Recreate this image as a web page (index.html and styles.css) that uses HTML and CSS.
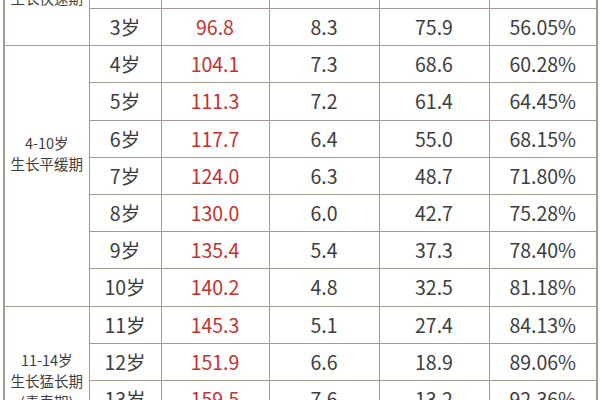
FILE: index.html
```html
<!DOCTYPE html>
<html lang="zh">
<head>
<meta charset="utf-8">
<link rel="stylesheet" href="styles.css">
</head>
<body>
<table class="growth">
  <colgroup>
    <col class="c-group"><col class="c-age"><col class="c-h"><col class="c-gain"><col class="c-rem"><col class="c-pct">
  </colgroup>
  <tbody>
    <tr class="row-hidden">
      <td class="group group-first" rowspan="2">0-3岁<br>生长快速期</td>
      <td>2岁</td><td class="red">88.5</td><td>10.3</td><td>84.2</td><td>51.24%</td>
    </tr>
    <tr><td>3岁</td><td class="red">96.8</td><td>8.3</td><td>75.9</td><td>56.05%</td></tr>
    <tr>
      <td class="group group-mid" rowspan="7">4-10岁<br>生长平缓期</td>
      <td>4岁</td><td class="red">104.1</td><td>7.3</td><td>68.6</td><td>60.28%</td>
    </tr>
    <tr><td>5岁</td><td class="red">111.3</td><td>7.2</td><td>61.4</td><td>64.45%</td></tr>
    <tr><td>6岁</td><td class="red">117.7</td><td>6.4</td><td>55.0</td><td>68.15%</td></tr>
    <tr><td>7岁</td><td class="red">124.0</td><td>6.3</td><td>48.7</td><td>71.80%</td></tr>
    <tr><td>8岁</td><td class="red">130.0</td><td>6.0</td><td>42.7</td><td>75.28%</td></tr>
    <tr><td>9岁</td><td class="red">135.4</td><td>5.4</td><td>37.3</td><td>78.40%</td></tr>
    <tr><td>10岁</td><td class="red">140.2</td><td>4.8</td><td>32.5</td><td>81.18%</td></tr>
    <tr>
      <td class="group" rowspan="4">11-14岁<br>生长猛长期<br>(青春期)</td>
      <td>11岁</td><td class="red">145.3</td><td>5.1</td><td>27.4</td><td>84.13%</td>
    </tr>
    <tr><td>12岁</td><td class="red">151.9</td><td>6.6</td><td>18.9</td><td>89.06%</td></tr>
    <tr><td>13岁</td><td class="red">159.5</td><td>7.6</td><td>13.2</td><td>92.36%</td></tr>
    <tr><td>14岁</td><td class="red">165.9</td><td>6.4</td><td>6.8</td><td>96.06%</td></tr>
  </tbody>
</table>
</body>
</html>
```

FILE: styles.css
```css
html, body {
  margin: 0;
  padding: 0;
  background: #ffffff;
}

body {
  overflow: hidden;
  height: 400px;
}

.growth {
  margin: -52.5px 0 0 3px;
  width: 593px;
  table-layout: fixed;
  border-collapse: collapse;
  border: 2px solid #a29c8e;
  font-family: "Noto Sans CJK SC", "Noto Sans", sans-serif;
  color: #3d3d3d;
}

.c-group { width: 85px; }
.c-age { width: 72px; }
.c-h { width: 108px; }
.c-gain { width: 110px; }
.c-rem { width: 110px; }
.c-pct { width: 108px; }

.growth td {
  border: 1.5px solid #a29c8e;
  height: 37.2px;
  padding: 0;
  text-align: center;
  vertical-align: middle;
  font-size: 19.5px;
  line-height: 24px;
  box-sizing: border-box;
}

.growth .row-hidden td {
  height: 60px;
}

.growth td.red {
  color: #c3322e;
}

.growth td.group {
  font-size: 14.5px;
  line-height: 21px;
}

.growth td.group-first {
  vertical-align: bottom;
  padding-bottom: 37px;
}

.growth td.group-mid {
  padding-bottom: 46px;
}
```
